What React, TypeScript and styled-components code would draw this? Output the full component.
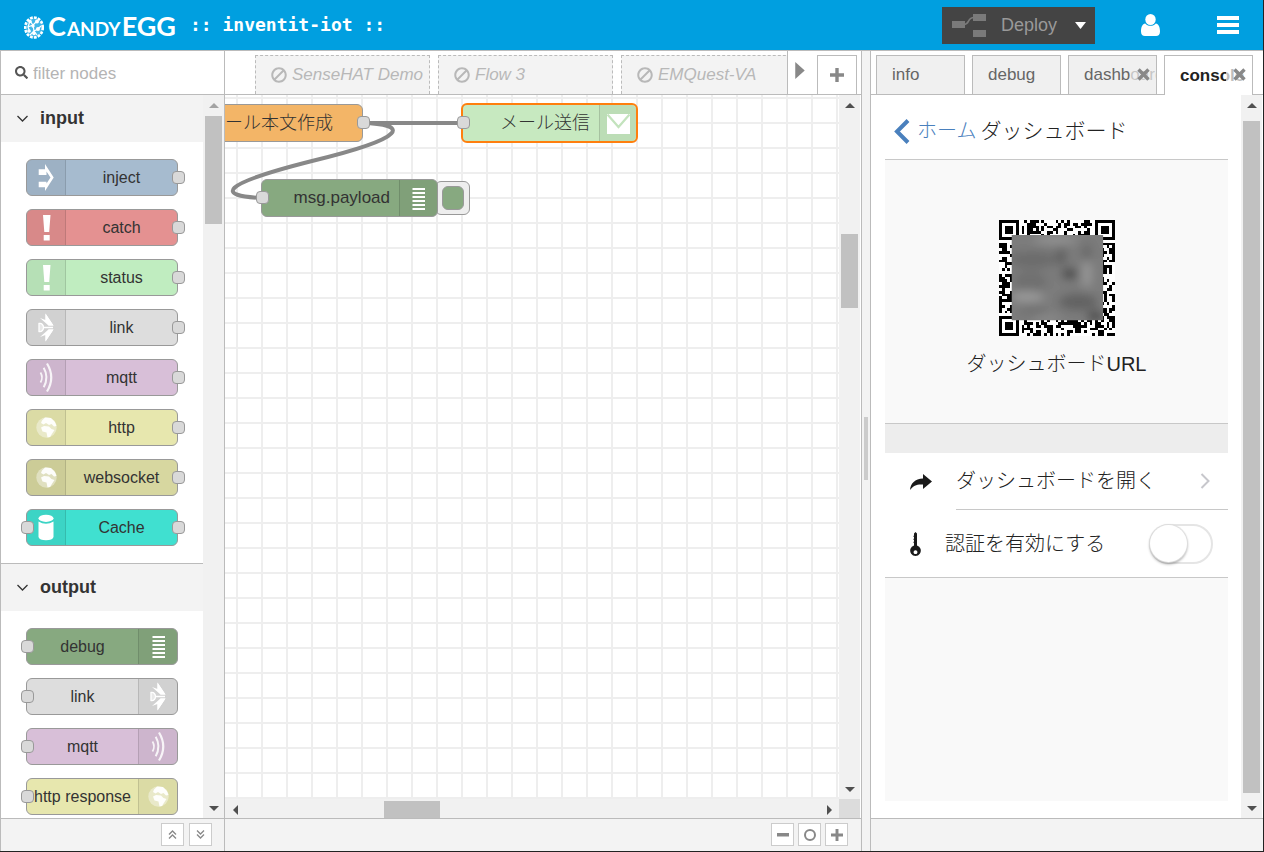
import React from "react";
import styled, { createGlobalStyle, css } from "styled-components";
import { FaBan, FaSearch } from "react-icons/fa";

const line = "#bbbbbb";
const sans = `"Liberation Sans", "Noto Sans CJK JP", sans-serif`;

const GlobalStyle = createGlobalStyle`
  *, *::before, *::after { box-sizing: border-box; }
  body { margin: 0; font-family: ${sans}; font-size: 17px; color: #333; background: #fff; }
  button, input { font-family: inherit; margin: 0; padding: 0; }
  button { cursor: pointer; }
  svg { display: block; flex: none; }
  h1, h2, ul { margin: 0; padding: 0; }
  ul { list-style: none; }
  a { text-decoration: none; }
`;

const Shell = styled.div`
  display: flex;
  flex-direction: column;
  height: 100vh;
  border-right: 1px solid #222;
  border-bottom: 1px solid #222;
  overflow: hidden;
`;

/* ---------- header ---------- */

const Header = styled.header`
  display: flex;
  align-items: center;
  flex: none;
  height: 50px;
  padding: 0 24px;
  background: #009fe0;
  color: #fff;
`;

const Brand = styled.div`
  display: flex;
  align-items: center;
  gap: 4px;
  padding-top: 4px;
`;

const BrandName = styled.span`
  display: flex;
  align-items: baseline;
  gap: 1px;
  width: 128px;
  font: 700 27px/32px Lato, sans-serif;
  small { font-size: 19px; }
`;

const ProjectName = styled.h1`
  flex: 1;
  margin-left: 14px;
  font: 700 18px/24px "DejaVu Sans Mono", monospace;
  white-space: nowrap;
`;

const DeployButton = styled.button`
  display: flex;
  align-items: center;
  width: 153px;
  height: 37px;
  padding: 0 9px 0 10px;
  border: 0;
  background: #444;
  color: #999;
  font-size: 18px;
  line-height: 24px;
  span { flex: 1; padding-left: 15px; text-align: left; }
`;

const HeaderButton = styled.button<{ $gap: number }>`
  display: flex;
  margin-left: ${(p) => p.$gap}px;
  border: 0;
  background: none;
  color: #fff;
`;

/* ---------- frame ---------- */

const Main = styled.main`
  display: flex;
  flex: 1;
  min-height: 0;
  border-top: 1px solid ${line};
`;

const Column = styled.section`
  display: flex;
  flex-direction: column;
  min-width: 0;
`;

const Palette = styled(Column)`
  flex: none;
  width: 225px;
  border-left: 1px solid ${line};
  border-right: 1px solid ${line};
`;

const Workspace = styled(Column)`
  flex: 1;
`;

const Sidebar = styled(Column)`
  flex: none;
  width: 392px;
`;

const Separator = styled.div`
  display: flex;
  align-items: center;
  justify-content: center;
  flex: none;
  width: 10px;
  padding-bottom: 6px;
  border-left: 1px solid ${line};
  border-right: 1px solid ${line};
  background: #f3f3f3;
`;

const Grip = styled.div`
  width: 4px;
  height: 63px;
  background: #ccc;
`;

const Footer = styled.footer<{ $end?: number; $gap?: number }>`
  display: flex;
  justify-content: flex-end;
  align-items: flex-start;
  flex: none;
  gap: ${(p) => p.$gap ?? 4}px;
  height: 33px;
  padding: 4px ${(p) => p.$end ?? 13}px 0 0;
  border-top: 1px solid ${line};
  background: #f3f3f3;
`;

const FootButton = styled.button`
  display: flex;
  align-items: center;
  justify-content: center;
  width: 23px;
  height: 23px;
  border: 1px solid #ccc;
  background: #fff;
  color: #888;
`;

/* ---------- scroll bars ---------- */

const Track = styled.div<{ $row?: boolean }>`
  display: flex;
  flex: none;
  flex-direction: ${(p) => (p.$row ? "row" : "column")};
  ${(p) => (p.$row ? css`height: 19px; padding-top: 2px;` : css`width: 21px; padding: 0 2px;`)}
  background: #f1f1f1;
`;

const TrackArrow = styled.div`
  display: flex;
  align-items: center;
  justify-content: center;
  flex: 0 0 21px;
  &:first-child { padding-top: 1px; }
`;

const TrackPart = styled.div<{ $size: number; $thumb?: boolean }>`
  flex: ${(p) => p.$size} 1 0;
  background: ${(p) => (p.$thumb ? "#c1c1c1" : "transparent")};
`;

const arrows: Record<string, string> = {
  up: "M0 7 5 2 10 7Z",
  down: "M0 3 5 8 10 3Z",
  left: "M7 0 2 5 7 10Z",
  right: "M3 0 8 5 3 10Z",
};

function Arrow({ to, color = "#505050" }: { to: string; color?: string }) {
  return (
    <svg width="10" height="10" viewBox="0 0 10 10">
      <path d={arrows[to]} fill={color} />
    </svg>
  );
}

function ScrollBar(p: { row?: boolean; before: number; size: number; after: number; atStart?: boolean }) {
  return (
    <Track $row={p.row} aria-hidden="true">
      <TrackArrow>
        <Arrow to={p.row ? "left" : "up"} color={p.atStart ? "#a3a3a3" : undefined} />
      </TrackArrow>
      <TrackPart $size={p.before} />
      <TrackPart $size={p.size} $thumb />
      <TrackPart $size={p.after} />
      <TrackArrow>
        <Arrow to={p.row ? "right" : "down"} />
      </TrackArrow>
    </Track>
  );
}

/* ---------- nodes ---------- */

const NodeBox = styled.div<{ $color: string; $flip?: boolean }>`
  position: relative;
  display: flex;
  flex-direction: ${(p) => (p.$flip ? "row-reverse" : "row")};
  height: 37px;
  border: 1px solid #999;
  border-radius: 6px;
  background: ${(p) => p.$color};
`;

const NodeIcon = styled.div<{ $flip?: boolean; $width?: number }>`
  display: flex;
  align-items: center;
  justify-content: center;
  flex: 0 0 ${(p) => p.$width ?? 39}px;
  background: rgba(0, 0, 0, 0.05);
  ${(p) =>
    p.$flip
      ? css`border-left: 1px solid rgba(0, 0, 0, 0.12); border-radius: 0 5px 5px 0;`
      : css`border-right: 1px solid rgba(0, 0, 0, 0.12); border-radius: 5px 0 0 5px;`}
`;

const NodeLabel = styled.span`
  flex: 1;
  font-size: 16px;
  line-height: 35px;
  text-align: center;
  white-space: nowrap;
`;

const Port = styled.i<{ $side: "left" | "right" }>`
  position: absolute;
  top: 11px;
  ${(p) => (p.$side === "left" ? "left: -6px" : "right: -8px")};
  width: 13px;
  height: 13px;
  border: 1px solid #999;
  border-radius: 4px;
  background: #d9d9d9;
`;

const icons: Record<string, React.ReactNode> = {
  inject: (
    <path
      d="M7.700 7.300H14V2L22.700 15.500 14 29V25.300H7.700V19.700H15.500V21.500L19.500 15.500 15.500 9.500V13H7.700Z"
      fill="#fff"
    />
  ),
  bang: <path d="M12 3h7.500L18.200 20h-4.900ZM12.700 23h6v5.500h-6z" fill="#fff" />,
  link: (
    <>
      <path d="M14.500 1.500 22.500 13.500H17.500L9 6 14.500 8ZM14.500 29.500 22.500 17.500H17.500L9 25 14.500 23Z" fill="#fff" />
      <path d="M14.500 1.500V8L17.500 13.500H22.500ZM14.500 29.500V23L17.500 17.500H22.500Z" fill="#fff" />
      <path d="M8 11.500c6-1 6 9 0 8zM13 15.500h9" fill="#fff" fillOpacity=".5" stroke="#fff" strokeWidth="1.300" />
    </>
  ),
  waves: (
    <g fill="none" stroke="#fff" opacity=".85">
      <path d="M9.500 10.500q3 5 0 10" strokeWidth="1.700" />
      <path d="M12.700 5.800q5.500 9.700 0 19.400" strokeWidth="2" />
      <path d="M16 1.500q8.500 14 0 28" strokeWidth="2.200" />
    </g>
  ),
  globe: (
    <>
      <circle cx="15.500" cy="15.500" r="10.200" fill="#fff" opacity=".4" />
      <path
        d="M11 8.500 14 5.600 20 6 24 10 25.500 14 23 14.500 20.500 12 18 13 15 11 12.500 12.500 10 11ZM10 15.500 13 14 18 14.500 20.500 17 23.500 18 21.500 21 19 25 16.500 25.600 15.500 20.500 11.500 19.500Z"
        fill="#fff"
        fillOpacity=".92"
      />
    </>
  ),
  can: (
    <>
      <ellipse cx="15" cy="6.300" rx="7.500" ry="3.600" fill="#fff" />
      <path d="M7.500 9.500q7.500 4.500 15 0V25q-1 3.300-7.500 3.300T7.500 25Z" fill="#fff" />
    </>
  ),
  list: <path d="M9.500 6H22M9.500 10H22M9.500 14H22M9.500 18H22M9.500 22H22M9.500 26H22" stroke="#fff" strokeWidth="1.800" />,
  mail: (
    <>
      <path d="M4 6h23v20H4z" fill="#fff" />
      <path d="M4.500 6.500 15.500 19 26.500 6.500" fill="none" stroke="#c3e3bd" strokeWidth="2.200" />
    </>
  ),
};

function Glyph({ name }: { name: string }) {
  return (
    <svg width="31" height="31" viewBox="0 0 31 31" aria-hidden="true">
      {icons[name]}
    </svg>
  );
}

interface NodeInfo {
  label: string;
  color: string;
  icon: string;
  inPort?: boolean;
  outPort?: boolean;
}

const inputNodes: NodeInfo[] = [
  { label: "inject", color: "#a6bbcf", icon: "inject", outPort: true },
  { label: "catch", color: "#e49191", icon: "bang", outPort: true },
  { label: "status", color: "#c0edc0", icon: "bang", outPort: true },
  { label: "link", color: "#dddddd", icon: "link", outPort: true },
  { label: "mqtt", color: "#d8bfd8", icon: "waves", outPort: true },
  { label: "http", color: "#e7e7ae", icon: "globe", outPort: true },
  { label: "websocket", color: "#d7d7a0", icon: "globe", outPort: true },
  { label: "Cache", color: "#40e0d0", icon: "can", inPort: true, outPort: true },
];

const outputNodes: NodeInfo[] = [
  { label: "debug", color: "#87a980", icon: "list", inPort: true },
  { label: "link", color: "#dddddd", icon: "link", inPort: true },
  { label: "mqtt", color: "#d8bfd8", icon: "waves", inPort: true },
  { label: "http response", color: "#e7e7ae", icon: "globe", inPort: true },
];

/* ---------- palette ---------- */

const Filter = styled.label`
  display: flex;
  align-items: center;
  flex: none;
  gap: 5px;
  height: 43px;
  padding-left: 14px;
  color: #555;
  input {
    flex: 1;
    min-width: 0;
    height: 30px;
    padding-top: 2px;
    border: 0;
    outline: 0;
    font-size: 17px;
    background: none;
  }
  input::placeholder { color: #b4b4b4; opacity: 1; }
`;

const PaletteBody = styled.div`
  display: flex;
  flex: 1;
  min-height: 0;
`;

const PaletteList = styled.div`
  flex: 1;
  min-width: 0;
  overflow: hidden;
`;

const PaletteTrack = styled.div`
  display: flex;
  border-top: 1px solid ${line};
`;

const CategoryHead = styled.h2`
  border-top: 1px solid ${line};
  button {
    display: flex;
    align-items: center;
    gap: 12px;
    width: 100%;
    height: 47px;
    padding-left: 16px;
    border: 0;
    background: #f3f3f3;
    color: #333;
    font-size: 18px;
    font-weight: 700;
  }
`;

const CategoryNodes = styled.ul`
  display: flex;
  flex-direction: column;
  gap: 13px;
  padding: 17px 25px;
`;

function Category({ title, nodes, flip }: { title: string; nodes: NodeInfo[]; flip?: boolean }) {
  return (
    <>
      <CategoryHead>
        <button type="button">
          <svg width="11" height="7" viewBox="0 0 11 7" fill="none" stroke="#333" strokeWidth="1.300">
            <path d="M.5 1 5.500 6 10.500 1" />
          </svg>
          {title}
        </button>
      </CategoryHead>
      <CategoryNodes>
        {nodes.map((n) => (
          <li key={n.label}>
            <NodeBox $color={n.color} $flip={flip}>
              <NodeIcon $flip={flip}>
                <Glyph name={n.icon} />
              </NodeIcon>
              <NodeLabel>{n.label}</NodeLabel>
              {n.inPort && <Port $side="left" />}
              {n.outPort && <Port $side="right" />}
            </NodeBox>
          </li>
        ))}
      </CategoryNodes>
    </>
  );
}

/* ---------- workspace ---------- */

const TabBar = styled.div`
  display: flex;
  align-items: flex-end;
  flex: none;
  height: 44px;
  border-bottom: 1px solid ${line};
`;

const FlowTabs = styled.div`
  display: flex;
  align-items: flex-end;
  flex: 1;
  align-self: stretch;
  gap: 8px;
  min-width: 0;
  padding-left: 30px;
  overflow: hidden;
`;

const FlowTab = styled.button`
  display: flex;
  align-items: center;
  flex: none;
  gap: 5px;
  width: 175px;
  height: 39px;
  padding-left: 15px;
  border: 1px dashed #bbb;
  border-bottom: 0;
  background: #f3f3f3;
  color: #b8b8b8;
  font-size: 17px;
  font-style: italic;
  white-space: nowrap;
  overflow: hidden;
`;

const DisabledIcon = styled(FaBan)`
  transform: scaleX(-1);
`;

const TabScroll = styled.button`
  display: flex;
  align-items: center;
  align-self: stretch;
  width: 30px;
  padding: 0 0 4px 7px;
  border: 0;
  border-left: 1px solid ${line};
  background: #fff;
`;

const TabAdd = styled.button`
  display: flex;
  align-items: center;
  justify-content: center;
  width: 40px;
  height: 39px;
  margin-right: 4px;
  border: 1px solid ${line};
  border-bottom: 0;
  background: #fff;
  color: #888;
`;

const ChartArea = styled.div`
  display: flex;
  flex: 1;
  min-height: 0;
  padding-right: 1px;
`;

const ChartColumn = styled.div`
  display: flex;
  flex-direction: column;
  flex: 1;
  min-width: 0;
`;

const Chart = styled.div`
  position: relative;
  flex: 1;
  overflow: hidden;
  background-color: #fff;
  background-image: linear-gradient(to right, #eee 2px, transparent 2px),
    linear-gradient(to bottom, #eee 2px, transparent 2px);
  background-size: 25px 25px;
  background-position: 11px 2px;
`;

const Wires = styled.svg`
  position: absolute;
  left: 0;
  top: 0;
`;

const FlowNode = styled(NodeBox)<{ $x: number; $y: number; $w: number; $selected?: boolean }>`
  position: absolute;
  left: ${(p) => p.$x}px;
  top: ${(p) => p.$y}px;
  width: ${(p) => p.$w}px;
  height: ${(p) => (p.$selected ? 40 : 38)}px;
  border: ${(p) => (p.$selected ? "2px solid #ff7f0e" : "1px solid #999")};
`;

const FlowLabel = styled.span<{ $latin?: boolean; $end?: number }>`
  flex: 1;
  padding-right: ${(p) => p.$end ?? 9}px;
  font-size: ${(p) => (p.$latin ? 17 : 18)}px;
  font-weight: 300;
  line-height: 36px;
  text-align: right;
  white-space: nowrap;
`;

const DebugToggle = styled.button`
  position: absolute;
  left: 210px;
  top: 86px;
  display: flex;
  align-items: center;
  justify-content: flex-end;
  width: 35px;
  height: 34px;
  padding-right: 5px;
  border: 1px solid #999;
  border-radius: 6px;
  background: #eee;
  i {
    width: 22px;
    height: 24px;
    border: 1px solid #999;
    border-radius: 6px;
    background: #87a980;
  }
`;

const TrackCorner = styled.div`
  flex: none;
  width: 21px;
  height: 19px;
  background: #dcdcdc;
`;

const VerticalSide = styled.div`
  display: flex;
  flex-direction: column;
  > :first-child { flex: 1; }
`;

/* ---------- sidebar ---------- */

const SideTabs = styled.div`
  display: flex;
  align-items: flex-end;
  flex: none;
  gap: 7px;
  height: 44px;
  padding-left: 5px;
  border-bottom: 1px solid ${line};
`;

const SideTab = styled.button<{ $active?: boolean }>`
  position: relative;
  width: 89px;
  height: ${(p) => (p.$active ? 40 : 39)}px;
  margin-bottom: ${(p) => (p.$active ? -1 : 0)}px;
  padding-left: 15px;
  border: 1px solid ${line};
  border-bottom: 0;
  background: ${(p) => (p.$active ? "#fff" : "#f0f0f0")};
  color: ${(p) => (p.$active ? "#222" : "#666")};
  font-size: 17px;
  font-weight: ${(p) => (p.$active ? 700 : 400)};
  text-align: left;
  white-space: nowrap;
  overflow: hidden;
`;

const TabFade = styled.span<{ $active?: boolean }>`
  position: absolute;
  top: 0;
  right: 0;
  bottom: 0;
  display: flex;
  align-items: center;
  width: 26px;
  padding: 0 0 2px 7px;
  background: ${(p) => (p.$active ? "rgba(255,255,255,.7)" : "rgba(240,240,240,.7)")};
`;

const SideBody = styled.div`
  display: flex;
  flex: 1;
  min-height: 0;
  padding-right: 1px;
`;

const Panel = styled.div`
  display: flex;
  flex-direction: column;
  flex: 1;
  margin: 0 13px 17px 14px;
  background: #f9f9f9;
  color: #222;
  font-size: 20px;
  font-weight: 300;
  line-height: 24px;
`;

const PanelHead = styled.div`
  display: flex;
  align-items: center;
  height: 65px;
  padding: 8px 0 0 9px;
  border-bottom: 1px solid #c8c8c8;
  background: #fff;
  font-size: 21px;
  a {
    display: flex;
    align-items: center;
    gap: 7px;
    margin-right: 4px;
    color: #4a80bd;
    font-size: 20px;
  }
`;

const QrArea = styled.div`
  display: flex;
  flex-direction: column;
  align-items: center;
  gap: 16px;
  padding: 60px 0 47px;
`;

const Band = styled.div`
  height: 30px;
  border-top: 1px solid #c8c8c8;
  background: #ededed;
`;

const OpenRow = styled.a`
  display: flex;
  background: #fff;
  color: #222;
  > span:first-child { display: flex; align-items: center; width: 71px; padding-left: 25px; }
  > span:last-child {
    display: flex;
    align-items: center;
    justify-content: space-between;
    flex: 1;
    height: 57px;
    padding-right: 18px;
    border-bottom: 1px solid #c8c8c8;
  }
`;

const AuthRow = styled.label`
  display: flex;
  align-items: center;
  height: 68px;
  padding: 0 15px 0 25px;
  border-bottom: 1px solid #c8c8c8;
  background: #fff;
  span { flex: 1; padding-left: 24px; }
`;

const Switch = styled.input`
  appearance: none;
  position: relative;
  width: 64px;
  height: 40px;
  border: 2px solid #e5e5e5;
  border-radius: 20px;
  background: #fff;
  &::before {
    content: "";
    position: absolute;
    left: -1px;
    top: -1px;
    width: 37px;
    height: 37px;
    border-radius: 50%;
    background: #fff;
    box-shadow: 0 0 1px 1px #ddd, 0 2px 3px rgba(0, 0, 0, 0.4);
  }
`;

const QR = 41;

function inFinder(x: number, y: number) {
  const near = (v: number) => v < 8;
  const far = (v: number) => v > QR - 9;
  return (near(x) && near(y)) || (far(x) && near(y)) || (near(x) && far(y));
}

function qrPath() {
  let d = "";
  let seed = 20177;
  for (let y = 0; y < QR; y++) {
    for (let x = 0; x < QR; x++) {
      seed = (seed * 1103515245 + 12345) % 2147483648;
      if (!inFinder(x, y) && (seed >> 12) % 100 < 52) d += `M${x} ${y}h1v1h-1z`;
    }
  }
  for (const [x, y] of [[0, 0], [QR - 7, 0], [0, QR - 7]]) {
    d += `M${x} ${y}h7v7h-7zM${x + 1} ${y + 1}v5h5v-5zM${x + 2} ${y + 2}h3v3h-3z`;
  }
  return d;
}

const smudges: [number, number, number, number, string][] = [
  [12, 14, 9, 3, "#6c6c6c"],
  [11, 22, 6, 4, "#707070"],
  [10, 27, 6, 2, "#999999"],
  [20, 7, 8, 1, "#9c9c9c"],
  [22, 13, 2, 3, "#606060"],
  [25, 19, 3, 2, "#4c4c4c"],
  [31, 12, 2, 4, "#6a6a6a"],
  [31, 19, 2, 5, "#949494"],
  [28, 29, 7, 3, "#626262"],
  [12, 32, 5, 1, "#6a6a6a"],
  [17, 35, 5, 1, "#909090"],
  [34, 34, 3, 2, "#4c4c4c"],
];

function QrCode() {
  return (
    <svg width="116" height="116" viewBox="0 0 41 41" role="img" aria-label="QR">
      <defs>
        <filter id="soft" x="-20%" y="-20%" width="140%" height="140%">
          <feGaussianBlur stdDeviation="1.600" />
        </filter>
        <clipPath id="mask">
          <path d="M4.500 5.300H36.800V35.400H4.500Z" />
        </clipPath>
      </defs>
      <rect width="41" height="41" fill="#fff" />
      <path d={qrPath()} fill="#000" shapeRendering="crispEdges" />
      <g clipPath="url(#mask)">
        <g filter="url(#soft)">
          <rect x="-6" y="-6" width="53" height="53" fill="#7c7c7c" />
          {smudges.map(([cx, cy, rx, ry, fill]) => (
            <ellipse key={`${cx}-${cy}`} cx={cx} cy={cy} rx={rx} ry={ry} fill={fill} />
          ))}
        </g>
      </g>
    </svg>
  );
}

function Cross() {
  return (
    <svg width="13" height="13" viewBox="0 0 13 13" stroke="#888" strokeWidth="3.400">
      <path d="M1.500 1.500 11.500 11.500M11.500 1.500 1.500 11.500" />
    </svg>
  );
}

function Plus({ size }: { size: number }) {
  return (
    <svg width={size} height={size} viewBox="0 0 14 14" fill="#888">
      <path d="M5.300 0h3.400v5.300H14v3.400H8.700V14H5.300V8.700H0V5.300h5.300z" />
    </svg>
  );
}

export default function App() {
  return (
    <Shell>
      <GlobalStyle />
      <Header>
        <Brand>
          <svg width="20" height="24" viewBox="0 0 20 24">
            <ellipse cx="10" cy="12.500" rx="8.800" ry="10" fill="#fff" fillOpacity=".25" stroke="#fff" strokeWidth="2.600" strokeDasharray="2.800 1.200" />
            <path d="M6 6 9 10 13 6M9 10l1 6 4-2M10 16l-4 4M4 12l5-2M14 14l3-3M10 16l3 4M6 6 4 12l2 5" fill="none" stroke="#fff" strokeWidth="1.200" />
            <g fill="#fff">
              <circle cx="6" cy="6.500" r="1.800" />
              <circle cx="13" cy="6.500" r="2" />
              <circle cx="9" cy="11" r="1.700" />
              <circle cx="14" cy="14" r="2" />
              <circle cx="5" cy="16" r="1.800" />
              <circle cx="10" cy="18.500" r="1.800" />
            </g>
          </svg>
          <BrandName>
            C<small>ANDY</small>EGG
          </BrandName>
        </Brand>
        <ProjectName>:: inventit-iot ::</ProjectName>
        <DeployButton type="button">
          <svg width="34" height="24" viewBox="0 0 34 24" fill="#7a7a7a">
            <path d="M0 8h13v7H0zM21 1h13v7H21zM21 17h13v7H21z" />
            <path d="M12 11.500c6 0 3-7 10-7" fill="none" stroke="#7a7a7a" strokeWidth="1.600" />
          </svg>
          <span>Deploy</span>
          <svg width="11" height="7" viewBox="0 0 11 7" fill="#fff">
            <path d="M0 0h11L5.500 7z" />
          </svg>
        </DeployButton>
        <HeaderButton type="button" $gap={46} aria-label="User">
          <svg width="19" height="22" viewBox="0 0 19 22" fill="currentColor">
            <ellipse cx="9.500" cy="5.500" rx="5.200" ry="5.500" />
            <path d="M4.200 9.500C1.500 10 0 13 0 17.500 0 20.500 1.500 22 4 22h11c2.500 0 4-1.500 4-4.500 0-4.500-1.500-7.500-4.200-8-1.300 1.500-3 2.300-5.300 2.300s-4-.8-5.300-2.300z" />
          </svg>
        </HeaderButton>
        <HeaderButton type="button" $gap={57} aria-label="Menu">
          <svg width="22" height="18" viewBox="0 0 22 18" fill="currentColor">
            <path d="M0 0h22v4H0zM0 7h22v4H0zM0 14h22v4H0z" />
          </svg>
        </HeaderButton>
      </Header>

      <Main>
        <Palette>
          <Filter>
            <FaSearch size={13} aria-hidden="true" />
            <input type="text" placeholder="filter nodes" aria-label="filter nodes" />
          </Filter>
          <PaletteBody>
            <PaletteList>
              <Category title="input" nodes={inputNodes} />
              <Category title="output" nodes={outputNodes} flip />
            </PaletteList>
            <PaletteTrack>
              <ScrollBar before={0} size={108} after={573} atStart />
            </PaletteTrack>
          </PaletteBody>
          <Footer $end={12} $gap={5}>
            <FootButton type="button" aria-label="Collapse all">
              <svg width="9" height="9" viewBox="0 0 9 9" fill="none" stroke="currentColor" strokeWidth="1.300">
                <path d="M1 4.500 4.500 1 8 4.500M1 8.500 4.500 5 8 8.500" />
              </svg>
            </FootButton>
            <FootButton type="button" aria-label="Expand all">
              <svg width="9" height="9" viewBox="0 0 9 9" fill="none" stroke="currentColor" strokeWidth="1.300">
                <path d="M1 .5 4.500 4 8 .5M1 4.500 4.500 8 8 4.500" />
              </svg>
            </FootButton>
          </Footer>
        </Palette>

        <Workspace>
          <TabBar>
            <FlowTabs>
              {["SenseHAT Demo", "Flow 3", "EMQuest-VA"].map((t) => (
                <FlowTab key={t} type="button">
                  <DisabledIcon size={16} aria-hidden="true" />
                  {t}
                </FlowTab>
              ))}
            </FlowTabs>
            <TabScroll type="button" aria-label="Scroll tabs">
              <svg width="10" height="17" viewBox="0 0 10 18" fill="#888">
                <path d="M0 0 10 9 0 18z" />
              </svg>
            </TabScroll>
            <TabAdd type="button" aria-label="Add flow">
              <Plus size={14} />
            </TabAdd>
          </TabBar>
          <ChartArea>
            <ChartColumn>
              <Chart>
                <Wires width="300" height="130" viewBox="0 0 300 130" fill="none" stroke="#888" strokeWidth="4">
                  <path d="M137 28H237" />
                  <path d="M137 28C183 29 186 42 87 66C-8 90 -8 101 37 103" />
                </Wires>
                <FlowNode $color="#f3b567" $x={-40} $y={9} $w={178}>
                  <FlowLabel $end={29}>メール本文作成</FlowLabel>
                  <Port $side="right" />
                </FlowNode>
                <FlowNode $color="#c7e9c0" $x={236} $y={8} $w={177} $flip $selected>
                  <NodeIcon $flip $width={37}>
                    <Glyph name="mail" />
                  </NodeIcon>
                  <FlowLabel>メール送信</FlowLabel>
                  <Port $side="left" />
                </FlowNode>
                <DebugToggle type="button" aria-label="Toggle debug">
                  <i />
                </DebugToggle>
                <FlowNode $color="#87a980" $x={36} $y={84} $w={177} $flip>
                  <NodeIcon $flip $width={38}>
                    <Glyph name="list" />
                  </NodeIcon>
                  <FlowLabel $latin>msg.payload</FlowLabel>
                  <Port $side="left" />
                </FlowNode>
              </Chart>
              <ScrollBar row before={138} size={56} after={378} />
            </ChartColumn>
            <VerticalSide>
              <ScrollBar before={118} size={74} after={470} />
              <TrackCorner />
            </VerticalSide>
          </ChartArea>
          <Footer>
            <FootButton type="button" aria-label="Zoom out">
              <svg width="12" height="4" viewBox="0 0 12 4" fill="currentColor">
                <path d="M0 0h12v3.500H0z" />
              </svg>
            </FootButton>
            <FootButton type="button" aria-label="Zoom reset">
              <svg width="12" height="12" viewBox="0 0 12 12" fill="none" stroke="currentColor" strokeWidth="2">
                <circle cx="6" cy="6" r="5" />
              </svg>
            </FootButton>
            <FootButton type="button" aria-label="Zoom in">
              <Plus size={12} />
            </FootButton>
          </Footer>
        </Workspace>

        <Separator>
          <Grip />
        </Separator>

        <Sidebar>
          <SideTabs>
            <SideTab type="button">info</SideTab>
            <SideTab type="button">debug</SideTab>
            <SideTab type="button">
              dashboard
              <TabFade>
                <Cross />
              </TabFade>
            </SideTab>
            <SideTab type="button" $active>
              console
              <TabFade $active>
                <Cross />
              </TabFade>
            </SideTab>
          </SideTabs>
          <SideBody>
            <Panel>
              <PanelHead>
                <a href="#home">
                  <svg width="16" height="25" viewBox="0 0 16 25" fill="none" stroke="currentColor" strokeWidth="4">
                    <path d="M14 1.500 3 12.500 14 23.500" />
                  </svg>
                  ホーム
                </a>
                ダッシュボード
              </PanelHead>
              <QrArea>
                <QrCode />
                <span>ダッシュボードURL</span>
              </QrArea>
              <Band />
              <OpenRow href="#open">
                <span>
                  <svg width="22" height="16" viewBox="0 0 22 16" fill="#1a1a1a">
                    <path d="M13 0 22 7.500 13 15V10.500C7 10 3.500 11.500 0 16 .5 9.500 5 4.800 13 4.500Z" />
                  </svg>
                </span>
                <span>
                  ダッシュボードを開く
                  <svg width="10" height="16" viewBox="0 0 10 16" fill="none" stroke="#c7c7cc" strokeWidth="2">
                    <path d="M1.500 1 8.500 8 1.500 15" />
                  </svg>
                </span>
              </OpenRow>
              <AuthRow>
                <svg width="11" height="24" viewBox="0 0 11 24" fill="#1a1a1a">
                  <path fillRule="evenodd" d="M4 1.500 5.500 0 7 1.500V13.500A5.300 5.300 0 1 1 4 13.500V11L3.200 10.200 4 9.400V8L3.200 7.200 4 6.400V5L3.200 4.200 4 3.400ZM5.500 18.300a1.900 1.900 0 1 0 .01 0Z" />
                </svg>
                <span>認証を有効にする</span>
                <Switch type="checkbox" role="switch" />
              </AuthRow>
            </Panel>
            <ScrollBar before={5} size={672} after={4} />
          </SideBody>
          <Footer />
        </Sidebar>
      </Main>
    </Shell>
  );
}
